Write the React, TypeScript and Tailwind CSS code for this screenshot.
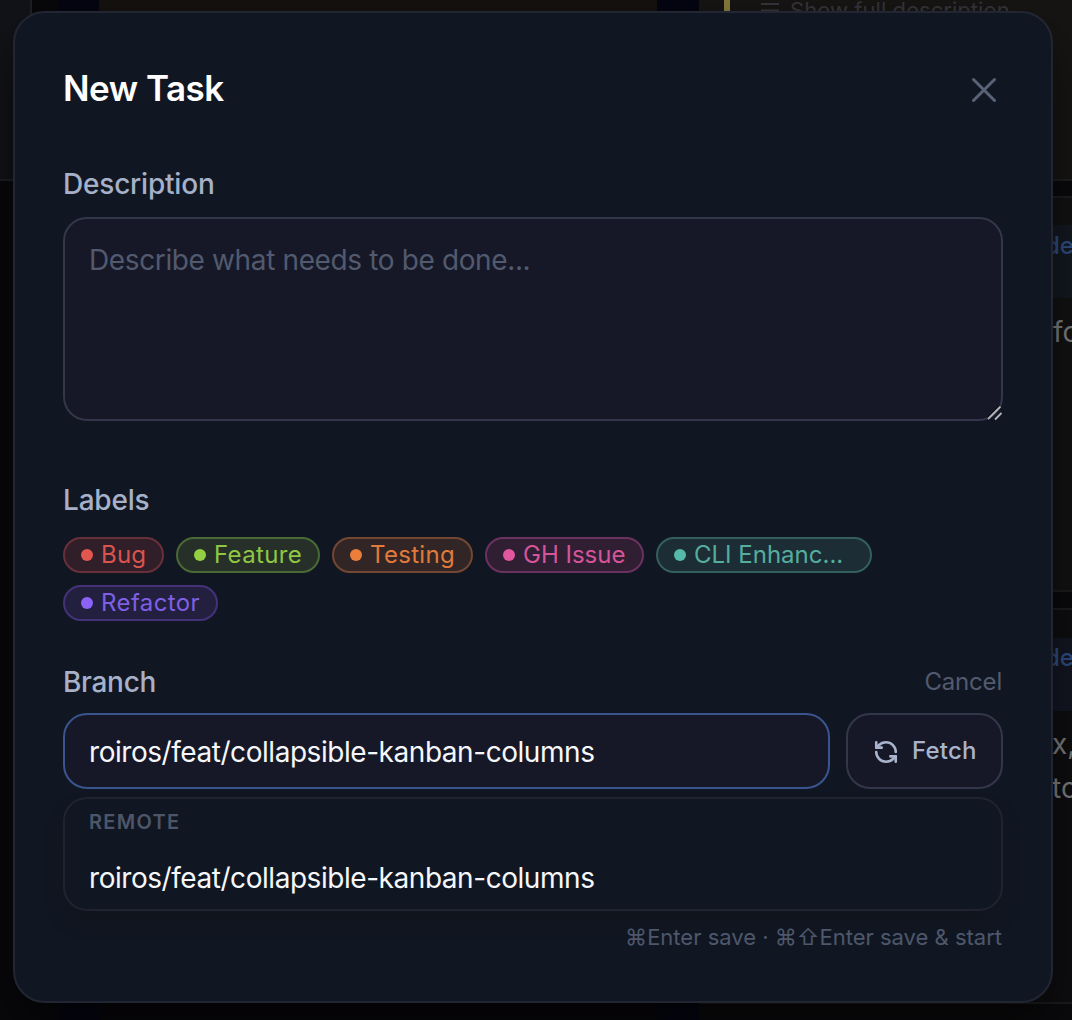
import { RefreshCcw, X } from 'lucide-react';

interface Label {
  name: string;
  className: string;
  dot: string;
}

const labels: Label[] = [
  { name: 'Bug', className: 'w-[101px] tracking-[0.2px] text-[#d9534f] bg-[#301f28] border-[#69303a]', dot: 'bg-[#e25650]' },
  { name: 'Feature', className: 'w-[144px] tracking-[0.35px] text-[#8fc744] bg-[#263028] border-[#4a6a35]', dot: 'bg-[#93cf43]' },
  { name: 'Testing', className: 'w-[141px] tracking-[0.3px] text-[#e07b3c] bg-[#322525] border-[#744732]', dot: 'bg-[#ea7f3b]' },
  { name: 'GH Issue', className: 'w-[159px] text-[#d5559a] bg-[#301f33] border-[#6b3260]', dot: 'bg-[#e0569f]' },
  { name: 'CLI Enhanc...', className: 'w-[216px] text-[#55ad9f] bg-[#1d2d35] border-[#33605f]', dot: 'bg-[#56b8a8]' },
  { name: 'Refactor', className: 'w-[155px] tracking-[0.4px] text-[#7f5fe6] bg-[#23203f] border-[#443279]', dot: 'bg-[#8a62f5]' },
];

function LabelChip({ label }: { label: Label }) {
  return (
    <button
      className={`flex h-9 items-center gap-2 whitespace-nowrap rounded-full border-2 pl-4 text-[24px] leading-8 ${label.className}`}
    >
      <span className={`h-3 w-3 shrink-0 rounded-full ${label.dot}`} />
      {label.name}
    </button>
  );
}

function Board() {
  return (
    <div className="absolute inset-0 flex">
      <div className="flex w-[58px] shrink-0 flex-col">
        <div className="h-[181px] w-8 rounded-br-sm border-b-2 border-r-2 border-[#1e1f23] bg-[#121318]" />
        <div className="flex-1 bg-[#08080b]" />
      </div>
      <div className="w-[41px] shrink-0 bg-[#050511]" />
      <div className="flex w-[558px] shrink-0 flex-col justify-between">
        <div className="h-[181px] bg-[#15110f]" />
        <div className="h-10 bg-[#08060a]" />
      </div>
      <div className="w-[42px] shrink-0 bg-[#050511]" />
      <div className="flex min-w-0 flex-1 flex-col bg-[#0a0a0c]">
        <div className="flex h-[181px] items-start border-b-2 border-[#1e1e1f] bg-[#161514] pl-[25px]">
          <span className="h-6 w-1.5 bg-[#847a3b]" />
          <svg className="ml-[30px] mt-[2px] h-4 w-5" viewBox="0 0 20 16" stroke="#34343a" strokeWidth="2">
            <path d="M1 2H19M1 8.5H19M1 15H19" />
          </svg>
          <span className="ml-[10px] whitespace-nowrap text-[22px] leading-5 tracking-[0.05px] text-[#343439]">
            Show full description
          </span>
        </div>
        <div className="mt-[15px] h-[396px] border-y-2 border-[#1c1c1e] bg-[#121213]">
          <div className="mt-[27px] h-[73px] bg-[#141920] pl-[346px] pt-[3px] text-[24px] font-medium leading-9 text-[#2f4c80]">
            de
          </div>
          <div className="pl-[354px] pt-3 text-[28px] leading-[44px] text-[#7c7c7f]">fo</div>
        </div>
        <div className="mt-4 h-[396px] border-y-2 border-[#1c1c1e] bg-[#0e0e10]">
          <div className="mt-7 h-[73px] bg-[#131622] pl-[346px] pt-0.5 text-[24px] font-medium leading-9 text-[#2f4c80]">
            de
          </div>
          <div className="pl-[353px] pt-[11px] text-[28px] leading-[44px] text-[#7c7c7f]">
            x,
            <br />
            to
          </div>
        </div>
      </div>
    </div>
  );
}

export default function App() {
  return (
    <div className="relative h-[1020px] w-[1072px] overflow-hidden bg-[#08080b] font-['Inter',sans-serif]">
      <Board />
      <div className="relative ml-[13px] mt-[11px] flex h-[992px] w-[1040px] flex-col rounded-[32px] border-2 border-[#222632] bg-[#111722] px-12 shadow-[0_24px_48px_rgba(0,0,0,0.5)]">
        <div className="mt-[52px] flex h-12 items-center justify-between">
          <h2 className="-mt-0.5 text-[35px] font-semibold leading-[48px] tracking-[-0.5px] text-white">New Task</h2>
          <button aria-label="Close" className="mr-[-2px] mt-0.5 text-[#596377]">
            <X className="h-[42px] w-[42px]" strokeWidth={1.75} />
          </button>
        </div>

        <label className="mt-[51px] text-[28px] font-medium leading-10 tracking-[-0.2px] text-[#a6b1c9]">
          Description
        </label>
        <div className="relative mt-[13px] h-[204px]">
          <textarea
            placeholder="Describe what needs to be done..."
            className="block h-full w-full resize-none rounded-3xl border-2 border-[#34364a] bg-[#171827] px-6 pt-[21px] text-[28px] leading-10 tracking-[-0.37px] outline-none placeholder:text-[#515a6e]"
          />
          <svg className="absolute bottom-0 right-0 h-4 w-4" viewBox="0 0 16 16" fill="none">
            <path d="M0.5 13L13 0.5" stroke="#0b0c14" strokeWidth="2" />
            <path d="M1 14L13.5 1.5M8 14.5L14.5 8" stroke="#b4b4b8" strokeWidth="1.8" />
          </svg>
        </div>

        <label className="mt-[59px] text-[28px] font-medium leading-10 tracking-[-0.2px] text-[#a6b1c9]">Labels</label>
        <div className="mt-[17px] flex flex-wrap gap-3">
          {labels.map((label) => (
            <LabelChip key={label.name} label={label} />
          ))}
        </div>

        <div className="mt-[41px] flex h-10 items-center justify-between">
          <label className="text-[28px] font-medium leading-10 tracking-[-0.3px] text-[#a6b1c9]">Branch</label>
          <button className="mr-px text-[24px] leading-8 tracking-[-0.2px] text-[#515a6e]">Cancel</button>
        </div>
        <div className="mt-[11px] flex h-[76px] gap-4">
          <input
            defaultValue="roiros/feat/collapsible-kanban-columns"
            className="w-[767px] rounded-3xl border-2 border-[#39548e] bg-[#171827] px-6 pt-0.5 text-[28px] tracking-[-0.45px] text-[#f5f7fa] outline-none"
          />
          <button className="flex flex-1 items-center rounded-3xl border-2 border-[#34364a] bg-[#171827] pl-[25px] text-[24px] font-medium tracking-[0.2px] text-[#a9b4cc]">
            <RefreshCcw className="mr-[13px] mt-0.5 h-[26px] w-[26px]" strokeWidth={2.4} />
            Fetch
          </button>
        </div>

        <div className="mt-2 h-[114px] rounded-3xl border-2 border-[#1f2330] bg-[#111722] px-6 shadow-[0_12px_20px_-6px_rgba(18,16,24,0.6)]">
          <div className="mt-2 text-[20px] font-semibold leading-[30px] tracking-[1.3px] text-[#4d5669]">REMOTE</div>
          <div className="mt-[21px] text-[28px] leading-10 tracking-[-0.45px] text-[#f5f7fa]">
            roiros/feat/collapsible-kanban-columns
          </div>
        </div>
        <p className="mr-px mt-2.5 text-right text-[22px] leading-8 text-[#4e576b]">
          ⌘Enter save · ⌘⇧Enter save &amp; start
        </p>
      </div>
    </div>
  );
}
